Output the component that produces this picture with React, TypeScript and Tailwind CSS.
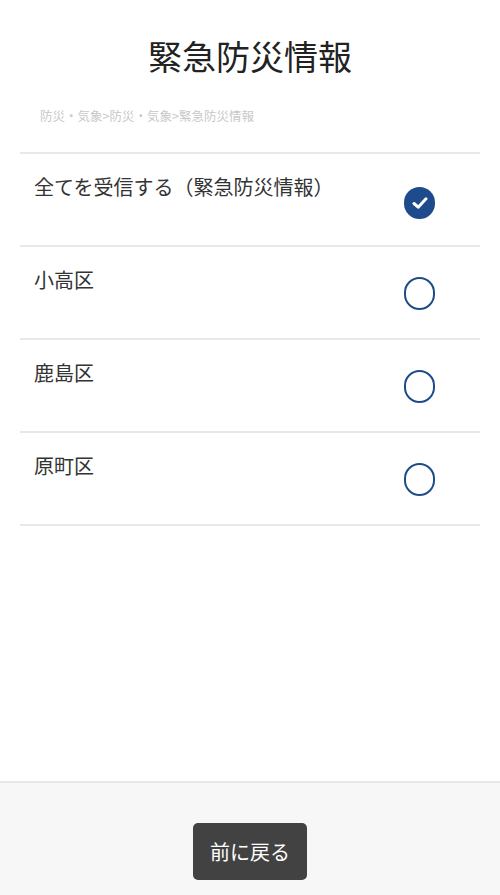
import React from "react";

const font = { fontFamily: '"Noto Sans CJK JP", "Noto Sans", sans-serif' };

function Row({ label, checked }: { label: string; checked?: boolean }) {
  return (
    <div className="flex h-[93px] items-start justify-between border-b-2 border-[#e8e8e8] pl-[14px] pr-[45px]">
      <div className="mt-[19px] text-[20px] leading-[28px] text-[#333333]">{label}</div>
      {checked ? (
        <div className="mt-[33px] flex h-[32px] w-[31px] items-center justify-center rounded-full bg-[#1e4b8b]">
          <svg width="16" height="14" viewBox="0 0 16 14" fill="none">
            <path d="M2 7.5 L6.2 11.2 L14 2.8" stroke="white" strokeWidth="3" strokeLinecap="round" strokeLinejoin="round" />
          </svg>
        </div>
      ) : (
        <div className="mt-[30px] h-[33px] w-[31px] rounded-full border-[2.5px] border-[#1e4b8b]" />
      )}
    </div>
  );
}

export default function App() {
  return (
    <div className="flex h-[895px] w-[500px] flex-col bg-white" style={font}>
      <div className="flex-1">
        <h1 className="pt-[35px] text-center text-[34px] font-normal leading-[42px] text-[#222222]">緊急防災情報</h1>
        <div className="mt-[30px] pl-[40px] text-[12.5px] leading-[18px] text-[#c8c8c8]">防災・気象&gt;防災・気象&gt;緊急防災情報</div>
        <div className="mx-[20px] mt-[27px] border-t-2 border-[#e8e8e8]">
          <Row label="全てを受信する（緊急防災情報）" checked />
          <Row label="小高区" />
          <Row label="鹿島区" />
          <Row label="原町区" />
        </div>
      </div>
      <div className="flex h-[114px] justify-center border-t-2 border-[#e8e8e8] bg-[#f7f7f7] pt-[40px]">
        <button className="h-[57px] w-[114px] rounded-[5px] bg-[#424242] text-[20px] text-white">前に戻る</button>
      </div>
    </div>
  );
}
